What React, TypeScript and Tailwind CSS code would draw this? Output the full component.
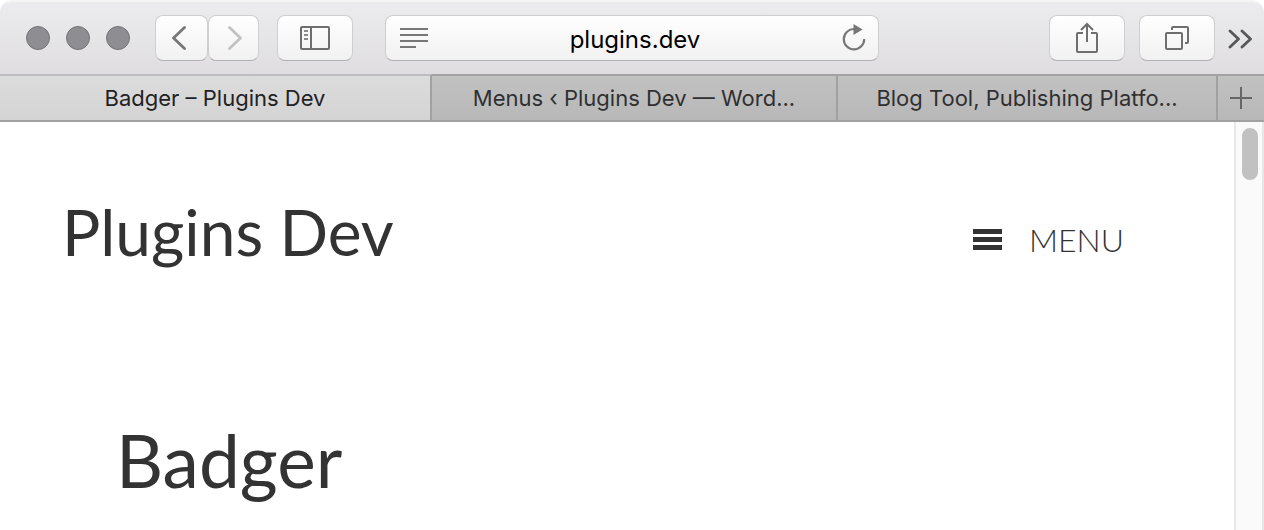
import type { ReactNode } from "react";

const tabs = [
  { title: "Badger – Plugins Dev", size: "flex-[398]", active: true },
  { title: "Menus ‹ Plugins Dev — Word...", size: "flex-[372]", active: false },
  { title: "Blog Tool, Publishing Platfo...", size: "flex-[346]", active: false },
];

function ToolButton({ label, className, children }: { label: string; className: string; children: ReactNode }) {
  return (
    <button
      type="button"
      aria-label={label}
      className={`flex h-[46px] shrink-0 items-center justify-center rounded-lg border border-[#cfced0] border-b-[#b1b0b2] bg-linear-to-b from-white to-[#f1f1f1] ${className}`}
    >
      {children}
    </button>
  );
}

function Toolbar() {
  return (
    <div className="flex h-[74px] items-center rounded-t-xl border-t-2 border-[#f4f4f5] bg-linear-to-b from-[#ececee] to-[#dfdde0] pr-3 pl-[26px]">
      <div className="flex shrink-0 gap-4">
        <button type="button" aria-label="Close" className="size-6 rounded-full border border-[#757478] bg-[#8e8d92]" />
        <button type="button" aria-label="Minimize" className="size-6 rounded-full border border-[#757478] bg-[#8e8d92]" />
        <button type="button" aria-label="Zoom" className="size-6 rounded-full border border-[#757478] bg-[#8e8d92]" />
      </div>

      <div className="ml-[25px] flex shrink-0">
        <ToolButton label="Back" className="w-[53px]">
          <svg width="16" height="26" viewBox="0 0 16 26" className="mr-2" fill="none" stroke="#777" strokeWidth="2.8" strokeLinecap="round" strokeLinejoin="round">
            <path d="M14.500 2.500 3.500 13l11 10.500" />
          </svg>
        </ToolButton>
        <ToolButton label="Forward" className="w-[51px]">
          <svg width="16" height="26" viewBox="0 0 16 26" className="ml-1" fill="none" stroke="#c2c2c3" strokeWidth="2.8" strokeLinecap="round" strokeLinejoin="round">
            <path d="m1.500 2.500 11 10.500-11 10.500" />
          </svg>
        </ToolButton>
      </div>

      <ToolButton label="Show sidebar" className="ml-[18px] w-[76px]">
        <svg width="30" height="24" viewBox="0 0 30 24" fill="none" stroke="#6e6e6e" strokeWidth="2">
          <rect x="1" y="1" width="28" height="22" rx="1" />
          <path d="M11 1v22" />
          <path d="M4 5h4M4 9h4M4 13h4" stroke="#8c8c8c" />
        </svg>
      </ToolButton>

      <div className="mr-[170px] ml-8 flex h-[46px] min-w-0 flex-1 items-center rounded-lg border border-[#cfced0] border-b-[#b1b0b2] bg-linear-to-b from-white to-[#f1f1f1] pr-3 pl-[14px]">
        <button type="button" aria-label="Reader view" className="shrink-0">
          <svg width="28" height="20" viewBox="0 0 28 20" fill="none" stroke="#777" strokeWidth="2">
            <path d="M0 1h28M0 7h28M0 13h28M0 19h16" />
          </svg>
        </button>
        <input
          type="text"
          aria-label="Address"
          defaultValue="plugins.dev"
          className="h-8 min-w-0 flex-1 bg-transparent pt-1 text-center text-[24px] text-black outline-none"
        />
        <button type="button" aria-label="Reload" className="shrink-0">
          <svg width="24" height="28" viewBox="0 0 24 28" fill="none">
            <path d="M12.500 5A10.200 10.200 0 1 0 22.200 15" stroke="#777" strokeWidth="2.200" />
            <path d="M11.500 0v11L20.500 5.500z" fill="#777" />
          </svg>
        </button>
      </div>

      <ToolButton label="Share" className="w-[76px]">
        <svg width="24" height="32" viewBox="0 0 24 32" fill="none" stroke="#6e6e6e" strokeWidth="2">
          <path d="M8 11H3a1 1 0 0 0-1 1v17a1 1 0 0 0 1 1h18a1 1 0 0 0 1-1V12a1 1 0 0 0-1-1h-5" />
          <path d="M12 20V2M6 8l6-6 6 6" />
        </svg>
      </ToolButton>
      <ToolButton label="Show all tabs" className="ml-[14px] w-[76px]">
        <svg width="24" height="24" viewBox="0 0 24 24" fill="none" stroke="#6e6e6e" strokeWidth="2">
          <rect x="1" y="7" width="16" height="16" rx="1" />
          <path d="M7 4V2a1 1 0 0 1 1-1h14a1 1 0 0 1 1 1v14a1 1 0 0 1-1 1h-2" />
        </svg>
      </ToolButton>
      <button type="button" aria-label="More tools" className="ml-[13px] shrink-0 pt-[2px]">
        <svg width="24" height="20" viewBox="0 0 24 20" fill="none" stroke="#575757" strokeWidth="2.800" strokeLinecap="round" strokeLinejoin="round">
          <path d="m2 2 8.500 8L2 18M14 2l8.500 8-8.500 8" />
        </svg>
      </button>
    </div>
  );
}

function TabBar() {
  return (
    <div role="tablist" className="flex h-12 text-[22px]">
      {tabs.map((tab) => (
        <button
          key={tab.title}
          type="button"
          role="tab"
          aria-selected={tab.active}
          className={`min-w-0 truncate border-y-2 border-r-2 border-r-[#a1a1a2] border-b-[#a1a1a2] px-4 ${tab.size} ${
            tab.active
              ? "border-t-[#bdbcbe] bg-linear-to-b from-[#dcdcdd] to-[#d4d4d5] text-[#222]"
              : "border-t-[#a3a3a4] bg-linear-to-b from-[#c1c1c2] to-[#b8b8b9] text-[#303030]"
          }`}
        >
          {tab.title}
        </button>
      ))}
      <button
        type="button"
        aria-label="New tab"
        className="flex w-[46px] shrink-0 items-center justify-center border-y-2 border-t-[#a3a3a4] border-b-[#a1a1a2] bg-linear-to-b from-[#c1c1c2] to-[#b8b8b9]"
      >
        <svg width="22" height="22" viewBox="0 0 22 22" stroke="#666" strokeWidth="2">
          <path d="M11 0v22M0 11h22" />
        </svg>
      </button>
    </div>
  );
}

export default function App() {
  return (
    <div className="flex min-h-screen flex-col bg-white font-[Inter,sans-serif]">
      <Toolbar />
      <TabBar />
      <div className="flex flex-1">
        <main className="min-w-0 flex-1 pl-[62px] font-[Lato,sans-serif] text-[#333]">
          <header className="flex items-center justify-between pt-[70px] pr-[110px]">
            <h1 className="text-[64px] leading-[80px]">
              <a href="#home">Plugins Dev</a>
            </h1>
            <button type="button" className="flex items-center gap-[27px] pt-4 text-[32px] leading-10 font-light">
              <svg width="29" height="22" viewBox="0 0 29 22" fill="currentColor">
                <path d="M0 0h29v5H0zM0 8h29v5H0zM0 16h29v5H0z" />
              </svg>
              MENU
            </button>
          </header>
          <h2 className="pt-[144px] pl-[54px] text-[73px] leading-[88px]">Badger</h2>
        </main>
        <div className="w-[30px] shrink-0 border-r-2 border-l-2 border-[#e7e7e7] bg-[#fafafa] pt-[6px] pl-[6px]">
          <div className="h-[52px] w-4 rounded-full bg-[#c1c1c1]" />
        </div>
      </div>
    </div>
  );
}
